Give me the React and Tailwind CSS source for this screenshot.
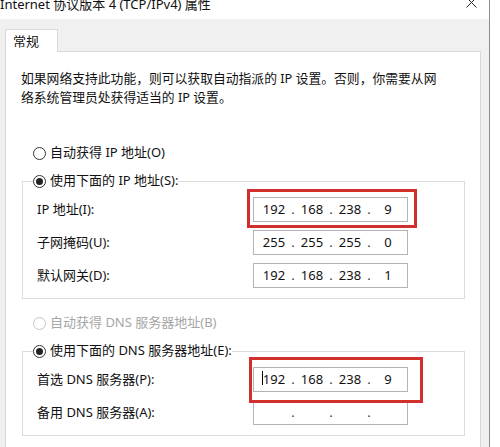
import React from 'react';

const Radio = ({ checked, disabled, label }) => (
  <div className="flex items-center h-[20px] gap-[4px]">
    <span
      className={`w-[13px] h-[13px] rounded-full border bg-white flex items-center justify-center ${
        disabled ? 'border-[#c4c4c4]' : 'border-[#333]'
      }`}
    >
      {checked && <span className="w-[7px] h-[7px] rounded-full bg-[#222]"></span>}
    </span>
    <span className={disabled ? 'text-[#a6a6a6]' : 'text-[#111]'}>{label}</span>
  </div>
);

const IpBox = ({ values = ['', '', '', ''], cursor }) => (
  <div className="w-[155px] h-[25px] border border-[#b4b4b4] bg-white flex items-center pl-[5px] text-[13px] text-[#111]">
    {values.map((v, i) => (
      <React.Fragment key={i}>
        {i > 0 && <span className="w-[8px] text-center text-[#333]">.</span>}
        <span className="relative w-[30px] text-center">
          {cursor && i === 0 && (
            <span className="absolute left-[3px] top-[1px] w-px h-[14px] bg-black"></span>
          )}
          {v || '\u00a0'}
        </span>
      </React.Fragment>
    ))}
  </div>
);

const Row = ({ label, children }) => (
  <div className="flex items-center h-[25px]">
    <span className="w-[216px]">{label}</span>
    {children}
  </div>
);

const App = () => {
  return (
    <div className="relative w-[500px] h-[447px] overflow-hidden flex bg-white font-['Noto_Sans','Noto_Sans_CJK_SC',sans-serif] text-[13px] text-[#111]">
      <div className="w-[489px] flex flex-col">
        {/* title bar */}
        <div className="h-[19px] bg-white flex justify-between overflow-hidden">
          <span className="block -mt-[5px] leading-[19px] whitespace-nowrap">
            Internet 协议版本 4 (TCP/IPv4) 属性
          </span>
          <svg className="-mt-[3px] mr-[12px]" width="11" height="11" viewBox="0 0 11 11">
            <path d="M0.5 0.5 L10.5 10.5 M10.5 0.5 L0.5 10.5" stroke="#222" strokeWidth="1" fill="none" />
          </svg>
        </div>

        {/* body */}
        <div className="flex-1 bg-[#f0f0f0] pl-[5px] pt-[10px] overflow-hidden">
          <div className="w-[53px] h-[23px] bg-white border border-[#d9d9d9] border-b-0 pl-[7px] leading-[22px] relative z-10 -mb-px">
            常规
          </div>
          <div className="w-[476px] h-[420px] bg-white border border-[#d9d9d9] flex flex-col">
            <p className="pl-[15px] pt-[17px] leading-[18.5px] text-[12.8px]">
              如果网络支持此功能，则可以获取自动指派的 IP 设置。否则，你需要从网
              <br />
              络系统管理员处获得适当的 IP 设置。
            </p>

            <div className="ml-[27px] mt-[37px]">
              <Radio label="自动获得 IP 地址(O)" />
            </div>

            <fieldset className="ml-[16px] w-[443px] mt-[8px] border border-[#dcdcdc] pl-[14px] pb-[10px]">
              <legend className="-ml-[4px] bg-white">
                <Radio checked label="使用下面的 IP 地址(S):" />
              </legend>
              <div className="flex flex-col gap-[8px] pt-[6px]">
                <Row label="IP 地址(I):">
                  <IpBox values={['192', '168', '238', '9']} />
                </Row>
                <Row label="子网掩码(U):">
                  <IpBox values={['255', '255', '255', '0']} />
                </Row>
                <Row label="默认网关(D):">
                  <IpBox values={['192', '168', '238', '1']} />
                </Row>
              </div>
            </fieldset>

            <div className="ml-[27px] mt-[14px]">
              <Radio disabled label="自动获得 DNS 服务器地址(B)" />
            </div>

            <fieldset className="ml-[16px] w-[443px] mt-[8px] border border-[#dcdcdc] pl-[14px] pb-[10px]">
              <legend className="-ml-[4px] bg-white">
                <Radio checked label="使用下面的 DNS 服务器地址(E):" />
              </legend>
              <div className="flex flex-col gap-[8px] pt-[6px]">
                <Row label="首选 DNS 服务器(P):">
                  <IpBox values={['192', '168', '238', '9']} cursor />
                </Row>
                <Row label="备用 DNS 服务器(A):">
                  <IpBox />
                </Row>
              </div>
            </fieldset>
          </div>
        </div>
      </div>

      {/* window edge */}
      <div className="w-px bg-[#8c8c8c]"></div>
      <div className="flex-1 bg-white"></div>

      {/* red highlight boxes */}
      <div className="absolute left-[247px] top-[189px] w-[170px] h-[39px] border-[3px] border-[#d12f2b]"></div>
      <div className="absolute left-[249px] top-[357px] w-[174px] h-[46px] border-[3px] border-[#d12f2b]"></div>
    </div>
  );
};

export default App;
